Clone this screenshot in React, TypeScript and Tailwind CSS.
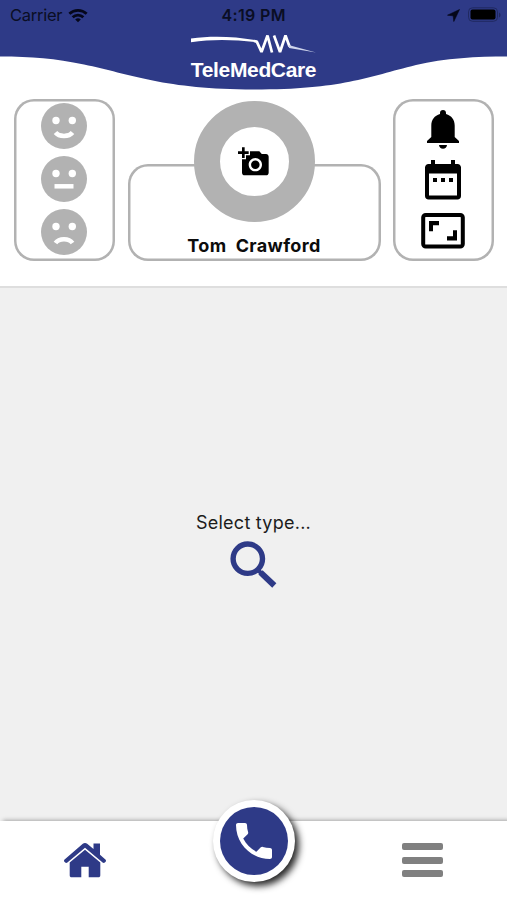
import React from "react";

const NAVY = "#2e3a87";

function StatusBar() {
  return (
    <div className="relative flex h-[30px] items-center justify-between pl-[10px] pr-[6px] leading-none text-[#0a0e24]">
      <div className="flex items-center gap-[6px]">
        <span className="w-[52px] whitespace-nowrap text-[16.5px] tracking-[-0.25px]">Carrier</span>
        <svg width="20" height="15" viewBox="0 0 21 16" fill="none" stroke="#05071a" strokeWidth="3">
          <path d="M1.300 6.200a13.400 13.400 0 0 1 18.400 0" />
          <path d="M4.800 9.900a8.300 8.300 0 0 1 11.400 0" />
          <path d="M10.500 15.200l-3-3a4.400 4.400 0 0 1 6 0z" fill="#05071a" stroke="none" />
        </svg>
      </div>
      <span className="absolute left-[221.5px] text-[16px] font-semibold tracking-[0.35px]">4:19 PM</span>
      <div className="flex items-center gap-[8px]">
        <svg width="13" height="13" viewBox="0 0 13 13">
          <path d="M12.500.500L.500 6.200l5.700.600.600 5.700z" fill="#05071a" stroke="#05071a" strokeWidth=".6" />
        </svg>
        <svg width="33" height="16" viewBox="0 0 33 16">
          <rect x=".5" y=".8" width="29" height="13.500" rx="4" fill="none" stroke="#202961" />
          <rect x="2.500" y="2.500" width="25" height="10" rx="2" fill="#000" />
          <path d="M31 5.500v5c2-.8 2-4.200 0-5z" fill="#202961" />
        </svg>
      </div>
    </div>
  );
}

function Header() {
  return (
    <header className="relative h-[90px]">
      <svg className="absolute inset-0" width="507" height="90" viewBox="0 0 507 90">
        <path d="M0 0H507V56.500C478 56.500 444 58 416 65C367 77 342 89.500 254 89.500C165 89.500 130 74 84 64.500C55 58.500 32 56.500 0 56.500Z" fill={NAVY} />
      </svg>
      <StatusBar />
      <div className="relative flex flex-col items-center">
        <svg width="128" height="28" viewBox="0 0 128 28">
          <path d="M1 8.500C22 5.500 44 6.500 65 10V12C44 9.500 22 8.800 1 12.300z" fill="#fff" />
          <path d="M64 11L66.800 11.600L71.500 22L77.500 5.500L82 22.500" fill="none" stroke="#fff" strokeWidth="2.700" strokeLinejoin="bevel" />
          <path d="M84 5.500L90 22L95.500 5.500L99.500 16.500" fill="none" stroke="#fff" strokeWidth="2.700" strokeLinejoin="bevel" />
          <path d="M98.500 15L126 22.500L99 18z" fill="#cfd5ec" />
        </svg>
        <div className="whitespace-nowrap font-['Liberation_Sans',sans-serif] text-[21px] font-bold leading-[24px] tracking-[-0.350px] text-white">TeleMedCare</div>
      </div>
    </header>
  );
}

function Face({ mouth }: { mouth: React.ReactNode }) {
  return (
    <svg width="46" height="46" viewBox="0 0 46 46">
      <circle cx="23" cy="23" r="23" fill="#b2b2b2" />
      <circle cx="15" cy="17.500" r="3.700" fill="#fff" />
      <circle cx="31.300" cy="17.500" r="3.700" fill="#fff" />
      <g fill="none" stroke="#fff" strokeWidth="4.500">{mouth}</g>
    </svg>
  );
}

function BellIcon() {
  return (
    <svg width="32" height="39" viewBox="0 0 32 39">
      <path d="M16 0c1.900 0 3 1.300 3 3v1c5.500 1.500 8.700 5.800 8.700 11.500V27l4.300 4V33H0v-2l4.300-4V15.500C4.300 9.800 7.500 5.500 13 4V3c0-1.700 1.100-3 3-3z" />
      <path d="M12 35h8c-.2 2.400-1.800 3.800-4 3.800S12.200 37.400 12 35z" />
    </svg>
  );
}

function CalendarIcon() {
  return (
    <svg width="36" height="40" viewBox="0 0 36 40">
      <path fillRule="evenodd" d="M6 0h4v4h16V0h4v4h2.500C34.500 4 36 5.600 36 7.500V36c0 2-1.500 3.500-3.500 3.500h-29C1.500 39.500 0 38 0 36V7.500C0 5.600 1.500 4 3.500 4H6zM4 13.500V35.500H32V13.500z" />
      <path d="M8 18h4v4H8zm8 0h4v4h-4zm8 0h4v4h-4z" />
    </svg>
  );
}

function ResizeIcon() {
  return (
    <svg width="44" height="36" viewBox="0 0 44 36">
      <rect x="2.200" y="2" width="39.600" height="31.600" rx="2.500" fill="none" stroke="#000" strokeWidth="4" />
      <path d="M8 8h10v4.200h-6v6H8zM36 27.500H26v-4.200h6v-6h4z" />
    </svg>
  );
}

function Profile() {
  return (
    <section className="flex h-[198px] items-start justify-between border-b-2 border-[#dedede] pl-[14px] pr-[13px] pt-[9px]">
      <div className="flex h-[162px] w-[101px] flex-col items-center gap-[7px] rounded-[20px] pr-[2px] pt-[4px] shadow-[inset_0_0_0_2.500px_#b2b2b2]">
        <Face mouth={<path d="M14.500 29.500c3.500 4.500 13.500 4.500 17 0" />} />
        <Face mouth={<path d="M13.500 30.300h19" />} />
        <Face mouth={<path d="M14.500 34c3.500-5 13.500-5 17 0" />} />
      </div>
      <div className="flex h-[162px] w-[253px] flex-col items-center justify-end">
        <div className="flex h-[97px] w-full flex-col items-center justify-end rounded-[20px] pb-[4px] shadow-[inset_0_0_0_2.500px_#b2b2b2]">
          <div className="mb-[13px] flex size-[121px] shrink-0 items-center justify-center rounded-full border-[26px] border-[#b2b2b2] bg-white">
            <svg width="32" height="32" viewBox="0 0 24 24" className="shrink-0">
              <path d="M3 4V1h2v3h3v2H5v3H3V6H0V4h3zm3 6V7h3V4h7l1.830 2H21c1.100 0 2 .9 2 2v12c0 1.100-.9 2-2 2H5c-1.100 0-2-.9-2-2V10h3zm7 9c2.760 0 5-2.240 5-5s-2.240-5-5-5-5 2.240-5 5 2.240 5 5 5zm-3.200-5c0 1.770 1.430 3.200 3.200 3.200s3.200-1.430 3.200-3.200-1.430-3.200-3.200-3.200-3.200 1.430-3.200 3.200z" />
            </svg>
          </div>
          <div className="whitespace-pre text-[18px] font-bold leading-[22px] tracking-[0.350px] text-[#0c0c0c]">Tom  Crawford</div>
        </div>
      </div>
      <div className="flex h-[162px] w-[101px] flex-col items-center rounded-[20px] pr-[2px] pt-[11px] shadow-[inset_0_0_0_2.500px_#b2b2b2]">
        <BellIcon />
        <div className="mt-[11px] h-[40px]"><CalendarIcon /></div>
        <div className="mt-[13px]"><ResizeIcon /></div>
      </div>
    </section>
  );
}

function TabBar() {
  return (
    <nav className="grid h-[79px] grid-cols-3 items-start justify-items-center bg-white shadow-[3px_-1px_4px_rgba(0,0,0,0.3)]">
      <div className="pt-[22px]">
        <svg width="42" height="35" viewBox="0 0 42 35" fill={NAVY}>
          <path d="M21 0c.8 0 1.600.300 2.200.800L29.500 6V.500H36v11.200l5.400 4.700c.7.700.8 1.600.2 2.300l-.8.800c-.6.600-1.500.600-2.200 0L21 4.800 3.400 19.500c-.7.600-1.600.6-2.200 0l-.8-.8c-.6-.7-.5-1.600.2-2.300L18.800.800C19.400.300 20.200 0 21 0z" />
          <path d="M21 6.700L36.300 19.500v12.800c0 1.400-.7 2-2 2h-9.600V23.700h-7.400v10.600H7.700c-1.300 0-2-.6-2-2V19.500z" />
        </svg>
      </div>
      <div className="-mt-[21px] flex size-[82px] items-center justify-center rounded-full bg-white shadow-[4px_4px_7px_rgba(0,0,0,0.85)]">
        <div className="flex size-[68px] items-center justify-center rounded-full bg-[#2e3a87]">
          <svg width="48" height="48" viewBox="0 0 24 24" fill="#fff">
            <path d="M6.620 10.790c1.440 2.830 3.760 5.140 6.590 6.590l2.200-2.200c.27-.27.670-.36 1.020-.24 1.120.370 2.330.570 3.570.570.550 0 1 .450 1 1V20c0 .550-.45 1-1 1C10.610 21 3 13.390 3 4c0-.55.450-1 1-1h3.500c.550 0 1 .450 1 1 0 1.250.200 2.450.570 3.570.110.350.030.740-.25 1.020z" />
          </svg>
        </div>
      </div>
      <div className="flex w-[41px] flex-col gap-[6.500px] pt-[22px]">
        <div className="h-[7px] rounded-[2px] bg-[#808080]" />
        <div className="h-[7px] rounded-[2px] bg-[#808080]" />
        <div className="h-[7px] rounded-[2px] bg-[#808080]" />
      </div>
    </nav>
  );
}

export default function App() {
  return (
    <div className="flex h-[900px] w-[507px] flex-col overflow-hidden bg-white font-['Inter',sans-serif]">
      <Header />
      <Profile />
      <main className="flex flex-1 flex-col items-center bg-[#f0f0f0] pt-[223px]">
        <p className="text-[18px] leading-[24px] tracking-[0.250px] text-[#1c1c1c]">Select type...</p>
        <svg className="mt-[6px]" width="48" height="48" viewBox="0 0 48 48" fill="none" stroke={NAVY}>
          <circle cx="17.800" cy="17.700" r="14.700" strokeWidth="5.400" />
          <path d="M27 28L31 32" strokeWidth="4" />
          <path d="M30.500 31.300L44.300 44.500" strokeWidth="6" />
        </svg>
      </main>
      <TabBar />
    </div>
  );
}
